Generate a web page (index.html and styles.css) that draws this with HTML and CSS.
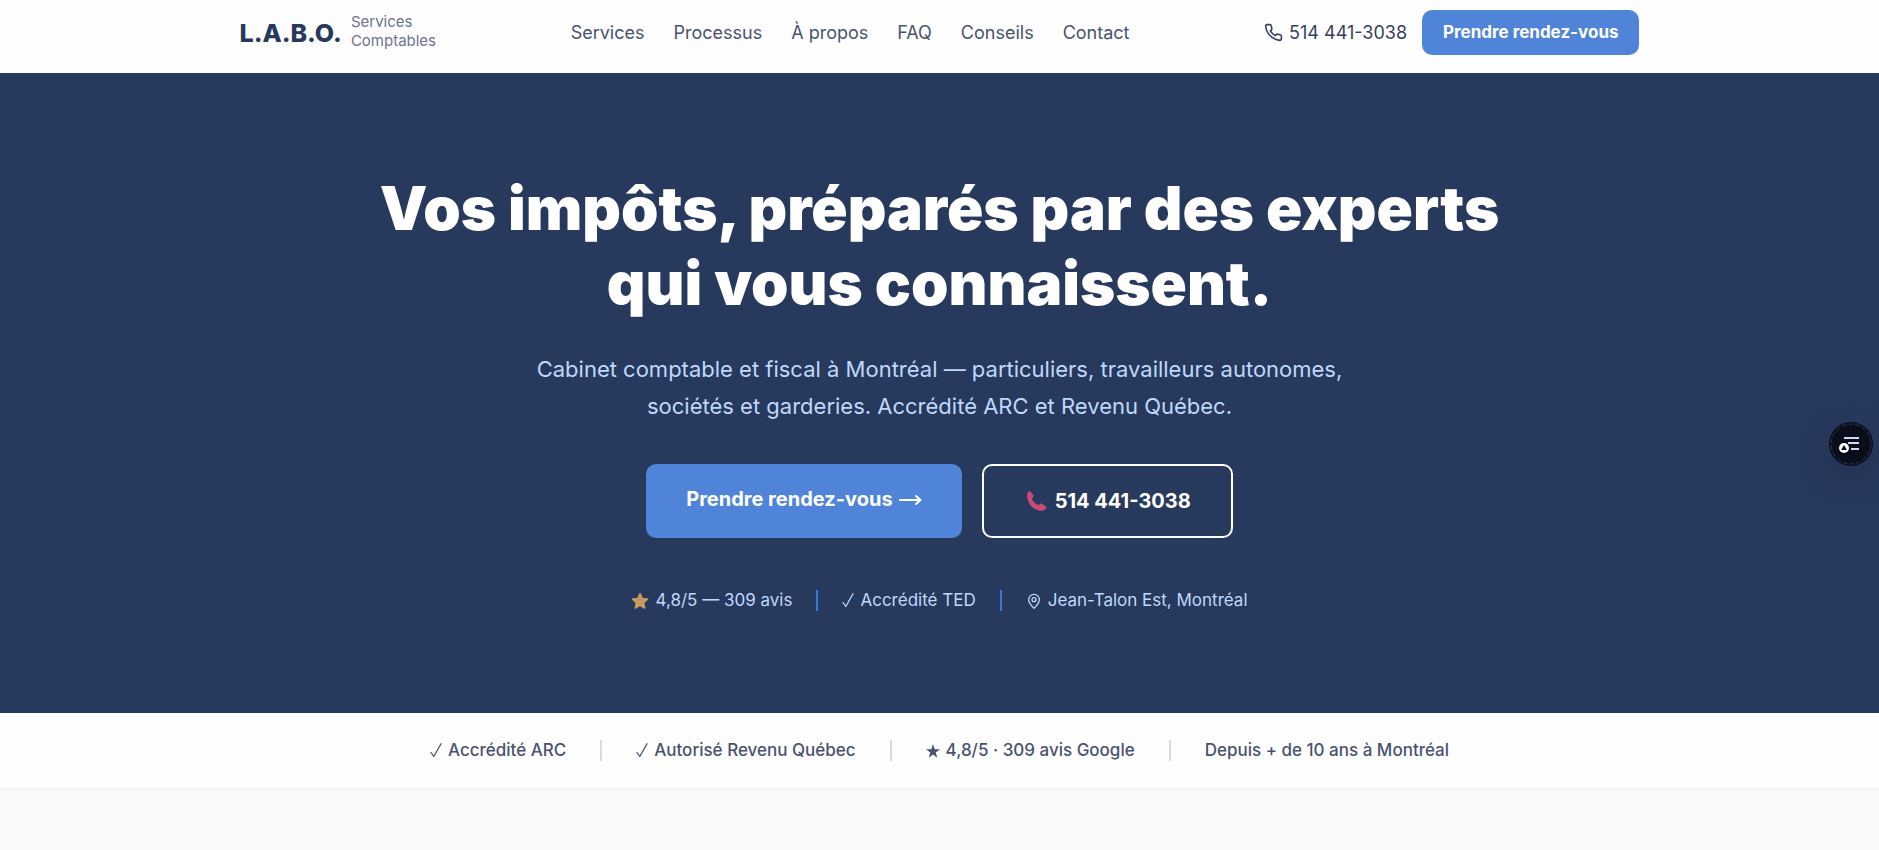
FILE: index.html
```
<!DOCTYPE html>
<html lang="fr">
<head>
  <meta charset="UTF-8" />
  <meta name="viewport" content="width=device-width, initial-scale=1.0"/>
  <title>L.A.B.O. Services Comptables</title>
  <link rel="stylesheet" href="styles.css">
</head>
<body>
  <svg width="0" height="0" class="sprite">
    <symbol id="check" viewBox="0 0 12 15">
      <path d="M1 9.500l2.800 4L11 .8" fill="none" stroke="currentColor" stroke-width="1.300" stroke-linecap="round" stroke-linejoin="round"/>
    </symbol>
  </svg>

  <header class="header">
    <div class="header-inner">
      <a href="#" class="logo">
        <span class="logo-name">L.A.B.O.</span>
        <span class="logo-sub">Services<br>Comptables</span>
      </a>

      <nav class="nav">
        <a href="#services">Services</a>
        <a href="#processus">Processus</a>
        <a href="#a-propos">À propos</a>
        <a href="#faq">FAQ</a>
        <a href="#conseils">Conseils</a>
        <a href="#contact">Contact</a>
      </nav>

      <div class="header-actions">
        <a href="tel:5144413038" class="header-phone">
          <svg class="icon-phone" viewBox="0 0 24 24" fill="none" stroke="currentColor" stroke-width="2" stroke-linecap="round" stroke-linejoin="round">
            <path d="M22 16.92v3a2 2 0 0 1-2.18 2 19.79 19.79 0 0 1-8.63-3.07 19.5 19.5 0 0 1-6-6 19.79 19.79 0 0 1-3.07-8.67A2 2 0 0 1 4.11 2h3a2 2 0 0 1 2 1.72 12.84 12.84 0 0 0 .7 2.81 2 2 0 0 1-.45 2.11L8.09 9.91a16 16 0 0 0 6 6l1.27-1.27a2 2 0 0 1 2.11-.45 12.84 12.84 0 0 0 2.81.7A2 2 0 0 1 22 16.92z"/>
          </svg>
          514 441-3038
        </a>
        <a href="#rendez-vous" class="btn-small">Prendre rendez-vous</a>
      </div>
    </div>
  </header>

  <main>
    <section class="hero">
      <h1>Vos impôts, préparés par des experts<br>qui vous connaissent.</h1>
      <p class="hero-text">Cabinet comptable et fiscal à Montréal — particuliers, travailleurs autonomes, sociétés et garderies. Accrédité ARC et Revenu Québec.</p>

      <div class="hero-buttons">
        <a href="#rendez-vous" class="btn btn-primary">
          Prendre rendez-vous
          <svg class="icon-arrow" viewBox="0 0 23 12" fill="none" stroke="currentColor" stroke-width="2" stroke-linecap="round" stroke-linejoin="round">
            <path d="M1 6h20M17 2l4.500 4-4.500 4"/>
          </svg>
        </a>
        <a href="tel:5144413038" class="btn btn-outline">
          <svg class="icon-handset" viewBox="-3 0 23 20">
            <path fill="#c94a78" d="M.8 1.500C1.500.2 3 0 3.900 1L6 3.800c.9 1.200.7 2.200-.3 3-.6.5-.7 1.100-.3 1.900 1.100 2 2.800 3.700 4.900 4.900.8.500 1.400.4 1.900-.2.900-1 1.800-1.100 3-.4l3 1.900c1.200.8 1.600 1.700.9 2.700-1.600 2.300-4.700 2.800-8 1.700C5.400 17.500.9 12.300.2 6.400 0 4.500.1 2.800.8 1.500z"/>
          </svg>
          514 441-3038
        </a>
      </div>

      <ul class="hero-trust">
        <li>
          <svg class="icon-star" viewBox="0 0 24 24">
            <path fill="#c49a62" stroke="#c49a62" stroke-width="2" stroke-linejoin="round" d="M12 2l3 6.600 7.200.8-5.400 4.900 1.500 7.200L12 17.900l-6.300 3.600 1.500-7.200L1.800 9.400 9 8.600z"/>
          </svg>
          4,8/5 — 309 avis
        </li>
        <li><svg class="icon-check"><use href="#check"/></svg>Accrédité TED</li>
        <li>
          <svg class="icon-pin" viewBox="0 0 24 24" fill="none" stroke="currentColor" stroke-width="2">
            <path d="M12 23c-4-4-8-8.500-8-13a8 8 0 0 1 16 0c0 4.500-4 9-8 13z"/>
            <circle cx="12" cy="10" r="3"/>
          </svg>
          Jean-Talon Est, Montréal
        </li>
      </ul>
    </section>

    <ul class="trust-bar">
      <li><svg class="icon-check"><use href="#check"/></svg>Accrédité ARC</li>
      <li><svg class="icon-check"><use href="#check"/></svg>Autorisé Revenu Québec</li>
      <li>
        <svg class="icon-rating" viewBox="0 0 14 14">
          <path fill="currentColor" d="M7 0l1.700 5.200H14L9.700 8.500l1.600 5.300L7 10.600l-4.300 3.200 1.600-5.300L0 5.200h5.300z"/>
        </svg>
        4,8/5 · 309 avis Google
      </li>
      <li>Depuis + de 10 ans à Montréal</li>
    </ul>
  </main>

  <button class="widget" type="button" aria-label="Menu">
    <svg viewBox="0 0 44 44">
      <circle cx="22" cy="22" r="20" fill="none" stroke="#27395d" stroke-width="1" stroke-dasharray="5 2"/>
      <path d="M15 16h15M19 21h11M22 27h8" stroke="#d3d6f2" stroke-width="2"/>
      <circle cx="15" cy="26" r="5" fill="#fff"/>
      <path d="M15 23l3 5h-6z" fill="#090e1a"/>
    </svg>
  </button>
</body>
</html>
```
FILE: styles.css
```
* {
  box-sizing: border-box;
}

body {
  font-family: 'Inter', sans-serif;
  margin: 0;
  min-height: 100vh;
  background: #faf8fb;
  color: #4a5270;
}

a {
  color: inherit;
  text-decoration: none;
}

ul {
  list-style: none;
  margin: 0;
  padding: 0;
}

.sprite {
  display: none;
}

.header {
  background: #fefefe;
  padding: 10px 24px 18px;
}

.header-inner {
  max-width: 1400px;
  margin: 0 auto;
  display: flex;
  align-items: center;
  justify-content: space-between;
}

.logo {
  display: flex;
  align-items: center;
  gap: 9px;
}

.logo-name {
  font-size: 25px;
  font-weight: 800;
  color: #27395d;
}

.logo-sub {
  font-size: 15px;
  line-height: 19px;
  padding-bottom: 3px;
  color: #6b7390;
}

.nav {
  display: flex;
  gap: 29px;
  font-size: 18px;
}

.header-actions {
  display: flex;
  align-items: center;
  gap: 15px;
}

.header-phone {
  display: flex;
  align-items: center;
  gap: 6px;
  font-size: 18px;
  color: #363e60;
}

.icon-phone {
  width: 19px;
  height: 19px;
}

.btn-small {
  background: #4f84d8;
  color: #fff;
  font-size: 17px;
  font-weight: 700;
  line-height: 21px;
  padding: 12px 21px;
  border-radius: 10px;
}

.hero {
  background: #27395d;
  color: #fff;
  padding: 98px 24px 102px;
  text-align: center;
}

.hero h1 {
  font-size: 60px;
  font-weight: 900;
  line-height: 75px;
  margin: 0 0 30px;
}

.hero-text {
  max-width: 860px;
  margin: 0 auto 39px;
  font-size: 22px;
  line-height: 37px;
  color: #bfd8fb;
}

.hero-buttons {
  display: flex;
  justify-content: center;
  gap: 20px;
  margin-bottom: 52px;
}

.btn {
  display: flex;
  gap: 6px;
  padding: 20px 40px;
  font-size: 20px;
  font-weight: 700;
  line-height: 30px;
  border-radius: 10px;
}

.btn-primary {
  background: #4f84d8;
}

.btn-outline {
  align-items: center;
  gap: 8px;
  border: 2px solid #fff;
}

.icon-arrow {
  width: 23px;
  height: 12px;
  margin-top: 10px;
}

.icon-handset {
  width: 23px;
  height: 20px;
}

.hero-trust,
.trust-bar {
  display: flex;
  justify-content: center;
  font-size: 17px;
  line-height: 21px;
}

.hero-trust li,
.trust-bar li {
  display: flex;
  align-items: center;
  gap: 6px;
}

.hero-trust {
  color: #bfd8fb;
}

.hero-trust li + li {
  border-left: 2px solid #3b78d8;
  margin-left: 24px;
  padding-left: 24px;
}

.icon-star {
  width: 18px;
  height: 18px;
}

.icon-check {
  width: 12px;
  height: 15px;
}

.icon-pin {
  width: 16px;
  height: 18px;
}

.icon-rating {
  width: 14px;
  height: 14px;
}

.trust-bar {
  background: #fefefe;
  border-bottom: 1px solid #f1f1f4;
  padding: 27px 24px;
  font-weight: 500;
}

.trust-bar li + li {
  border-left: 2px solid #d5dbe6;
  margin-left: 34px;
  padding-left: 34px;
}

.widget {
  position: fixed;
  top: 422px;
  right: 6px;
  width: 44px;
  height: 44px;
  padding: 0;
  border: none;
  border-radius: 50%;
  background: #090e1a;
  box-shadow: 0 10px 30px rgba(30, 40, 65, 0.4);
  cursor: pointer;
}

.widget svg {
  display: block;
}
```
